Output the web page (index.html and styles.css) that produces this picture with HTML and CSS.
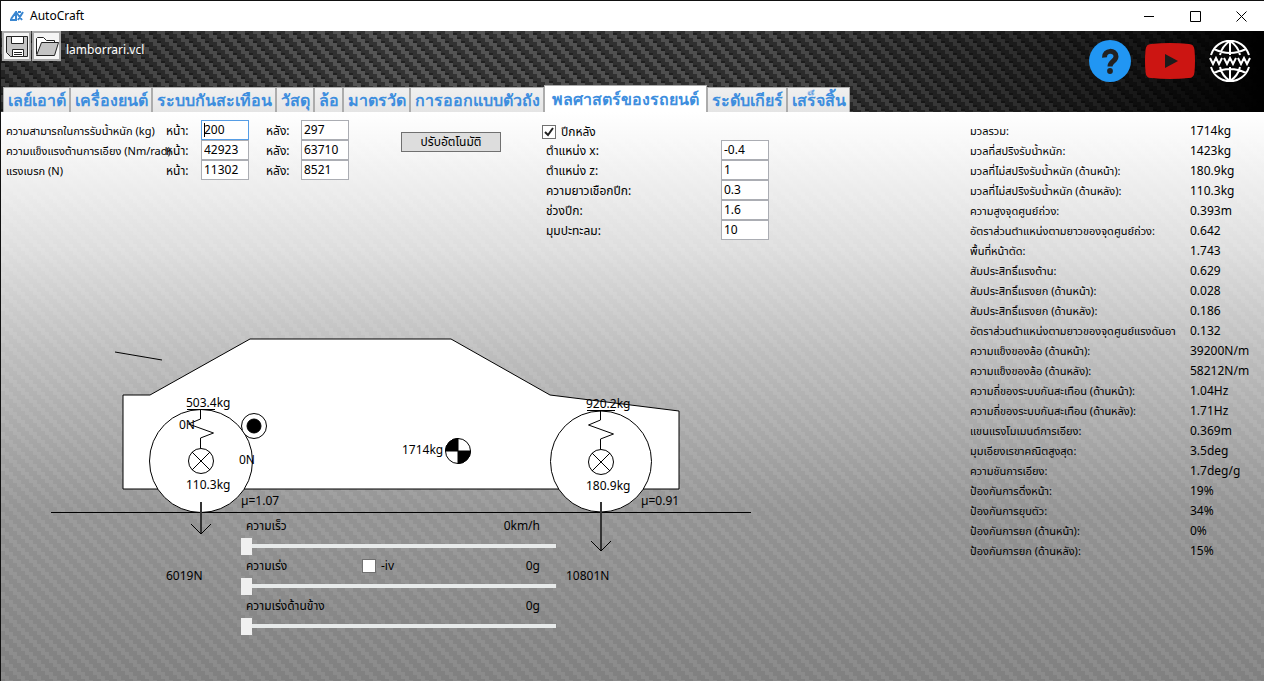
FILE: index.html
```
<!DOCTYPE html>
<html lang="th">
<head>
    <meta charset="UTF-8">
    <meta name="viewport" content="width=device-width, initial-scale=1.0">
    <title>AutoCraft</title>
    <link rel="stylesheet" href="styles.css">
</head>
<body>
<div class="window">
    <header class="titlebar">
        <svg class="app-icon" width="14" height="10" viewBox="0 0 14 10" fill="none" stroke="#3a86d0" stroke-width="2">
            <path d="M0 9h6V1L1 8M6 1l6 8M13 1L8 9M8 1h3"/>
        </svg>
        <span class="app-name">AutoCraft</span>
        <div class="window-buttons">
            <button type="button" aria-label="Minimize"><svg width="11" height="11" stroke="#000"><path d="M0 5.500h10"/></svg></button>
            <button type="button" aria-label="Maximize"><svg width="11" height="11" fill="none" stroke="#000"><path d="M.5 .5h10v10h-10z"/></svg></button>
            <button type="button" aria-label="Close"><svg width="11" height="11" fill="none" stroke="#000"><path d="M.5 .5l10 10M10.500 .5l-10 10"/></svg></button>
        </div>
    </header>

    <div class="banner">
        <div class="toolbar">
            <button class="tool" type="button" aria-label="Save">
                <svg width="24" height="24" viewBox="0 0 24 24" stroke="#222">
                    <path d="M1.500 2.500h21v20h-17l-4-4z" fill="#c4c4c4"/>
                    <path d="M6.500 2.500h12v7h-12z" fill="#fff"/>
                    <path d="M7.500 15.500h11v7h-11z" fill="#fff"/>
                    <path d="M9 18.500h8M9 20.500h8"/>
                </svg>
            </button>
            <button class="tool" type="button" aria-label="Open">
                <svg width="24" height="24" viewBox="0 0 24 24" stroke="#222">
                    <path d="M1.500 20V4.500l1-1h6l3 3h8v3" fill="#fff"/>
                    <path d="M6.500 8.500h17l-4 13h-18z" fill="#c4c4c4"/>
                </svg>
            </button>
            <span class="file-name">lamborrari.vcl</span>
        </div>
        <nav class="links">
            <a href="#help" aria-label="Help">
                <svg width="42" height="42" viewBox="0 0 42 42">
                    <circle cx="21" cy="21" r="21" fill="#2196f3"/>
                    <path d="M15.500 17.500c-.5-8 11.500-8 11.500-1 0 5-6 4.500-6 10" fill="none" stroke="#222" stroke-width="5"/>
                    <circle cx="21" cy="31" r="2.900" fill="#222"/>
                </svg>
            </a>
            <a href="#videos" aria-label="YouTube">
                <svg width="50" height="36" viewBox="0 0 50 36">
                    <path d="M6 1Q25-1 44 1q5 0 5.500 6 1 11 0 22-.5 6-5.500 6-19 2-38 0-5 0-5.500-6-1-11 0-22Q1 1 6 1z" fill="#cc1512"/>
                    <path d="M20 11v14l13-7z" fill="#1c1c1c"/>
                </svg>
            </a>
            <a href="#website" aria-label="Website">
                <svg width="42" height="42" viewBox="0 0 42 42" fill="none" stroke="#fff" stroke-width="2">
                    <path d="M2 15C8-4 34-4 40 15M2 27c6 19 32 19 38 0M21 1v14M21 27v14M5 9q16 8 32 0M5 33q16-8 32 0M11 15q2-9 10-14 8 5 10 14M11 27q2 9 10 14 8-5 10-14"/>
                    <path d="M1 18l3 6 3-6 3 6 3-6M15 18l3 6 3-6 3 6 3-6M29 18l3 6 3-6 3 6 3-6"/>
                </svg>
            </a>
        </nav>
        <div class="tabs" role="tablist">
            <button class="tab" role="tab" type="button">เลย์เอาต์</button>
            <button class="tab" role="tab" type="button">เครื่องยนต์</button>
            <button class="tab" role="tab" type="button">ระบบกันสะเทือน</button>
            <button class="tab" role="tab" type="button">วัสดุ</button>
            <button class="tab" role="tab" type="button">ล้อ</button>
            <button class="tab" role="tab" type="button">มาตรวัด</button>
            <button class="tab" role="tab" type="button">การออกแบบตัวถัง</button>
            <button class="tab selected" role="tab" type="button" aria-selected="true">พลศาสตร์ของรถยนต์</button>
            <button class="tab" role="tab" type="button">ระดับเกียร์</button>
            <button class="tab" role="tab" type="button">เสร็จสิ้น</button>
        </div>
    </div>

    <main class="panel">
        <div class="workspace">
            <div class="settings">
                <div class="axles">
                    <span>ความสามารถในการรับน้ำหนัก (kg)</span>
                    <label for="load-front">หน้า:</label><input class="active" id="load-front" type="text" value="200">
                    <label for="load-rear">หลัง:</label><input id="load-rear" type="text" value="297">
                    <span>ความแข็งแรงต้านการเอียง (Nm/rad)</span>
                    <label for="roll-front">หน้า:</label><input id="roll-front" type="text" value="42923">
                    <label for="roll-rear">หลัง:</label><input id="roll-rear" type="text" value="63710">
                    <span>แรงเบรก (N)</span>
                    <label for="brake-front">หน้า:</label><input id="brake-front" type="text" value="11302">
                    <label for="brake-rear">หลัง:</label><input id="brake-rear" type="text" value="8521">
                </div>
                <button class="auto" type="button">ปรับอัตโนมัติ</button>
                <div class="wing">
                    <label class="check"><input type="checkbox" checked>ปีกหลัง</label>
                    <label for="wing-x">ตำแหน่ง x:</label><input id="wing-x" type="text" value="-0.4">
                    <label for="wing-z">ตำแหน่ง z:</label><input id="wing-z" type="text" value="1">
                    <label for="wing-chord">ความยาวเชือกปีก:</label><input id="wing-chord" type="text" value="0.3">
                    <label for="wing-span">ช่วงปีก:</label><input id="wing-span" type="text" value="1.6">
                    <label for="wing-angle">มุมปะทะลม:</label><input id="wing-angle" type="text" value="10">
                </div>
            </div>

            <div class="canvas">
                <svg class="car" width="760" height="440" viewBox="1 240 760 440" fill="none" stroke="#000">
                    <path d="M115 352l47 8"/>
                    <path class="fill" d="M123 395h27l100-56h201l99 56 129 16v78H123z"/>
                    <circle class="fill" cx="201" cy="461" r="51.500"/>
                    <circle class="fill" cx="601" cy="461.500" r="50.500"/>
                    <path d="M51 512.500h700"/>

                    <!-- front and rear springs -->
                    <path d="M187 409.500h28M200.500 409v10l-12 5 25 9-13 5v10"/>
                    <path d="M587 410.500h28M600.500 410v10l-12 5 25 9-13 5v10"/>
                    <circle class="fill" cx="201" cy="461" r="12.500"/>
                    <path d="M192 452l18 18M210 452l-18 18"/>
                    <circle class="fill" cx="601" cy="462" r="12.500"/>
                    <path d="M592 453l18 18M610 453l-18 18"/>

                    <!-- wheel loads -->
                    <path d="M201 502v32" class="force"/>
                    <path d="M191 524l10 10 10-10"/>
                    <path d="M601 502v49" class="force"/>
                    <path d="M591 541l10 10 10-10"/>

                    <circle class="fill" cx="254" cy="426" r="12.500"/>
                    <circle cx="254" cy="426" r="7" fill="#000"/>
                    <circle class="fill" cx="458" cy="451" r="12.500"/>
                    <path d="M458 451h-12.500a12.500 12.500 0 0 1 12.500-12.500zM458 451h12.500a12.500 12.500 0 0 1-12.500 12.500z" fill="#000"/>

                    <g class="captions">
                        <text x="186" y="407">503.4kg</text>
                        <text x="179" y="429">0N</text>
                        <text x="239" y="464">0N</text>
                        <text x="186" y="489">110.3kg</text>
                        <text x="241" y="505">µ=1.07</text>
                        <text x="166" y="580">6019N</text>
                        <text x="402" y="454">1714kg</text>
                        <text x="586" y="408">920.2kg</text>
                        <text x="586" y="490">180.9kg</text>
                        <text x="641" y="505">µ=0.91</text>
                        <text x="566" y="580">10801N</text>
                    </g>
                </svg>
                <div class="sliders">
                    <div class="slider-head"><label for="speed">ความเร็ว</label><output for="speed">0km/h</output></div>
                    <input id="speed" type="range" value="0">
                    <div class="slider-head">
                        <label for="accel">ความเร่ง</label>
                        <label class="check"><input type="checkbox">-iv</label>
                        <output for="accel">0g</output>
                    </div>
                    <input id="accel" type="range" value="0">
                    <div class="slider-head"><label for="lateral">ความเร่งด้านข้าง</label><output for="lateral">0g</output></div>
                    <input id="lateral" type="range" value="0">
                </div>
            </div>
        </div>

        <dl class="stats">
            <dt>มวลรวม:</dt><dd>1714kg</dd>
            <dt>มวลที่สปริงรับน้ำหนัก:</dt><dd>1423kg</dd>
            <dt>มวลที่ไม่สปริงรับน้ำหนัก (ด้านหน้า):</dt><dd>180.9kg</dd>
            <dt>มวลที่ไม่สปริงรับน้ำหนัก (ด้านหลัง):</dt><dd>110.3kg</dd>
            <dt>ความสูงจุดศูนย์ถ่วง:</dt><dd>0.393m</dd>
            <dt>อัตราส่วนตำแหน่งตามยาวของจุดศูนย์ถ่วง:</dt><dd>0.642</dd>
            <dt>พื้นที่หน้าตัด:</dt><dd>1.743</dd>
            <dt>สัมประสิทธิ์แรงต้าน:</dt><dd>0.629</dd>
            <dt>สัมประสิทธิ์แรงยก (ด้านหน้า):</dt><dd>0.028</dd>
            <dt>สัมประสิทธิ์แรงยก (ด้านหลัง):</dt><dd>0.186</dd>
            <dt>อัตราส่วนตำแหน่งตามยาวของจุดศูนย์แรงดันอา</dt><dd>0.132</dd>
            <dt>ความแข็งของล้อ (ด้านหน้า):</dt><dd>39200N/m</dd>
            <dt>ความแข็งของล้อ (ด้านหลัง):</dt><dd>58212N/m</dd>
            <dt>ความถี่ของระบบกันสะเทือน (ด้านหน้า):</dt><dd>1.04Hz</dd>
            <dt>ความถี่ของระบบกันสะเทือน (ด้านหลัง):</dt><dd>1.71Hz</dd>
            <dt>แขนแรงโมเมนต์การเอียง:</dt><dd>0.369m</dd>
            <dt>มุมเอียงเรขาคณิตสูงสุด:</dt><dd>3.5deg</dd>
            <dt>ความชันการเอียง:</dt><dd>1.7deg/g</dd>
            <dt>ป้องกันการดิ่งหน้า:</dt><dd>19%</dd>
            <dt>ป้องกันการยุบตัว:</dt><dd>34%</dd>
            <dt>ป้องกันการยก (ด้านหน้า):</dt><dd>0%</dd>
            <dt>ป้องกันการยก (ด้านหลัง):</dt><dd>15%</dd>
        </dl>
    </main>
</div>
</body>
</html>
```
FILE: styles.css
```
* {
    box-sizing: border-box;
}
body {
    margin: 0;
    color: #000;
    font: 12px/20px "Noto Sans", "Noto Sans Thai", sans-serif;
}
button, input {
    font: inherit;
    color: inherit;
    margin: 0;
}
svg {
    display: block;
}
.window {
    display: flex;
    flex-direction: column;
    min-height: 100vh;
    border-top: 1px solid #111;
    border-left: 1px solid #111;
}

/* title bar */
.titlebar {
    display: flex;
    align-items: center;
    height: 30px;
    padding-left: 9px;
    background: #fff;
}
.app-name {
    margin-left: 6px;
}
.window-buttons {
    display: flex;
    margin-left: auto;
}
.window-buttons button {
    display: grid;
    place-items: center;
    width: 46px;
    height: 30px;
    padding: 0;
    border: 0;
    background: none;
}

/* carbon banner */
.banner {
    display: grid;
    grid-template-columns: 1fr auto;
    grid-template-rows: 54px 27px;
    background:
        linear-gradient(90deg, rgba(0, 0, 0, .3), rgba(0, 0, 0, 0) 30%, rgba(0, 0, 0, .1) 60%, rgba(0, 0, 0, .5) 82%, #000),
        url("data:image/svg+xml,%3Csvg xmlns='http://www.w3.org/2000/svg' width='16' height='16'%3E%3Cpath fill='%23333' d='M0 0h16v16H0z'/%3E%3Cpath fill='%23555' d='M0 0h4v7H0zM4 4h4v7H4zM8 8h4v7H8zM12 12h4v4h-4zM12 0h4v3h-4z'/%3E%3Cpath fill='%23222' d='M4 2h4v2H4zM8 6h4v2H8zM12 10h4v2h-4zM0 14h4v2H0z'/%3E%3C/svg%3E");
}
.toolbar {
    display: flex;
    align-items: flex-start;
    gap: 1px;
    padding: 0 1px;
}
.tool {
    display: grid;
    place-items: center;
    width: 29px;
    height: 30px;
    padding: 0;
    border: 2px solid #aaa;
    background: #f4f4f4;
}
.file-name {
    margin: 9px 0 0 4px;
    color: #fff;
}
.links {
    display: flex;
    grid-row: span 2;
    grid-column: 2;
    align-items: center;
    align-self: start;
    gap: 14px;
    padding: 9px 13px 0 0;
}
.tabs {
    display: flex;
    grid-row: 2;
    grid-column: 1;
    align-items: flex-end;
    padding-left: 2px;
}
.tab {
    height: 25px;
    padding: 0 3px 0 4px;
    border: 1px solid #acacac;
    border-bottom: 0;
    background: linear-gradient(#f0f0f0, #e5e5e5);
    color: #3e8ede;
    font-size: 16px;
    font-weight: bold;
    font-family: "Open Sans", sans-serif;
    line-height: 24px;
    white-space: nowrap;
}
.tab.selected {
    height: 27px;
    padding: 0 7px;
    background: #fff;
}

/* main panel */
.panel {
    display: grid;
    flex: 1;
    grid-template-columns: 1fr 294px;
    padding-top: 8px;
    background:
        url("data:image/svg+xml,%3Csvg xmlns='http://www.w3.org/2000/svg' width='16' height='16'%3E%3Cpath fill='%23fff' fill-opacity='.08' d='M0 0h4v7H0zM4 4h4v7H4zM8 8h4v7H8zM12 12h4v4h-4zM12 0h4v3h-4z'/%3E%3C/svg%3E"),
        linear-gradient(#fff, #dedede 24%, #bebebe 42%, #949494 70%, #808080);
}
.settings {
    display: flex;
    align-items: flex-start;
    height: 120px;
    padding-left: 5px;
}
.axles {
    display: grid;
    grid-template-columns: 160px 35px 65px 35px 48px;
    grid-auto-rows: 20px;
    white-space: nowrap;
    line-height: 22px;
}
.axles span,
.stats dt {
    font-size: 11px;
}
input[type="text"] {
    width: 48px;
    height: 20px;
    padding: 0 2px 2px;
    border: 1px solid #abadb3;
    background: #fff;
    line-height: 16px;
}
input[type="text"].active {
    border-color: #569de5;
    background: linear-gradient(#000, #000) 2px 2px / 1px 14px no-repeat #fff;
}
.auto {
    width: 100px;
    height: 20px;
    margin: 12px 41px 0 52px;
    padding: 0;
    border: 1px solid #707070;
    background: #ddd;
    line-height: 18px;
}
.wing {
    display: grid;
    grid-template-columns: 179px 48px;
    grid-auto-rows: 20px;
    line-height: 22px;
}
.wing label:not(.check) {
    padding-left: 4px;
}
.check {
    display: flex;
    align-items: center;
    gap: 5px;
}
.wing .check {
    grid-column: span 2;
    padding-top: 3px;
}
input[type="checkbox"] {
    appearance: none;
    width: 14px;
    height: 14px;
    border: 1px solid #707070;
    background: #fff;
}
input[type="checkbox"]:checked {
    background: url("data:image/svg+xml,%3Csvg xmlns='http://www.w3.org/2000/svg' width='12' height='12'%3E%3Cpath d='M2 6l3 3 5-7' fill='none' stroke='%23212121' stroke-width='2'/%3E%3C/svg%3E") #fff;
}

/* car diagram */
.canvas {
    position: relative;
}
.car .fill {
    fill: #fff;
}
.car .force {
    stroke: #333;
    stroke-width: 2;
}
.captions {
    fill: #000;
    stroke: none;
}
.sliders {
    position: absolute;
    left: 240px;
    top: 276px;
    width: 315px;
}
.slider-head {
    display: grid;
    grid-template-columns: 116px 1fr auto;
    height: 20px;
    padding: 0 16px 0 5px;
}
.slider-head output {
    grid-column: 3;
}
input[type="range"] {
    appearance: none;
    display: block;
    width: 100%;
    height: 20px;
    background: linear-gradient(#e7eaea, #e7eaea) center / 100% 4px no-repeat;
}
input[type="range"]::-webkit-slider-thumb {
    appearance: none;
    width: 11px;
    height: 17px;
    border: 0;
    background: #f0f0f0;
}

.stats {
    display: grid;
    grid-template-columns: 220px 1fr;
    grid-auto-rows: 20px;
    margin: 0;
    line-height: 22px;
    white-space: nowrap;
}
.stats dt {
    overflow: hidden;
    margin-right: 10px;
}
.stats dd {
    margin: 0;
}
```
